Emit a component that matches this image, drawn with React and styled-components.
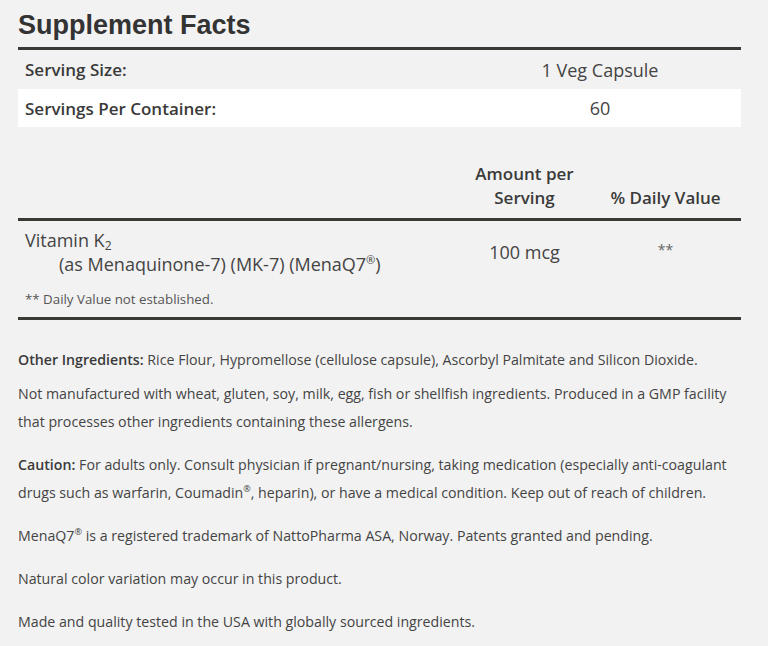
import React from "react"
import { styled, createGlobalStyle } from "styled-components"

const GlobalStyle = createGlobalStyle`
    html, body {
        margin: 0;
        padding: 0;
        background: #f2f2f2;
    }

    body {
        font-family: "Open Sans", "Liberation Sans", sans-serif;
        color: #444;
    }
`

const Page = styled.div`
    padding: 0 27px 0 18px;
    width: 723px;
`

const Title = styled.h2`
    margin: 0;
    padding: 10px 0 6px;

    font-family: "Liberation Sans", Arial, sans-serif;
    font-size: 27px;
    font-weight: 700;
    line-height: 31px;
    color: #333;

    border-bottom: 3px solid #3a3935;
`

const Table = styled.table`
    width: 100%;
    border-collapse: collapse;
    font-size: 18px;
    color: #444;

    td, th {
        padding: 0;
    }
`

const ServingRow = styled.tr`
    background: ${({ $white }) => ($white ? "#fff" : "transparent")};
    height: ${({ $h }) => $h}px;

    th {
        text-align: left;
        padding-left: 7px;
        font-size: 17px;
        font-weight: 600;
        color: #3a3a3a;
    }

    td {
        text-align: center;
    }
`

const HeadRow = styled.tr`
    height: 92px;

    th {
        font-size: 17px;
        font-weight: 600;
        color: #3a3a3a;
        text-align: center;
        vertical-align: bottom;
        padding: 0 0 8px;
        line-height: 24px;
        border-bottom: 3px solid #3a3935;
    }
`

const NutrientRow = styled.tr`
    td {
        padding-top: 7px;
        line-height: 24px;
        vertical-align: top;
    }

    td.name {
        padding-left: 7px;
    }

    td.amount {
        text-align: center;
        padding-top: 19px;
    }

    td.dv {
        text-align: center;
        padding-top: 17px;
        color: #666;
        font-size: 14px;
    }

    sub {
        font-size: 12px;
        vertical-align: -3px;
        line-height: 0;
    }

    sup {
        font-size: 11px;
        line-height: 0;
    }
`

const Indent = styled.div`
    padding-left: 34px;
`

const NoteRow = styled.tr`
    td {
        padding: 14px 7px 9px;
        font-size: 13.3px;
        color: #555;
        border-bottom: 3px solid #3a3935;
    }
`

const Notes = styled.div`
    padding-top: 26px;
    font-size: 14.2px;
    line-height: 28px;
    color: #444;

    p {
        margin: 0 0 15px;
    }

    p.tight {
        margin-bottom: 6px;
    }

    strong {
        font-weight: 600;
        color: #3a3a3a;
    }

    sup {
        font-size: 9px;
        line-height: 0;
    }
`

function App() {
    return (
        <>
            <GlobalStyle />
            <Page>
                <Title>Supplement Facts</Title>
                <Table>
                    <colgroup>
                        <col style={{ width: 441 }} />
                        <col style={{ width: 131 }} />
                        <col style={{ width: 151 }} />
                    </colgroup>
                    <tbody>
                        <ServingRow $h={39}>
                            <th>Serving Size:</th>
                            <td colSpan={2}>1 Veg Capsule</td>
                        </ServingRow>
                        <ServingRow $h={38} $white>
                            <th>Servings Per Container:</th>
                            <td colSpan={2}>60</td>
                        </ServingRow>
                        <HeadRow>
                            <th></th>
                            <th>Amount per<br />Serving</th>
                            <th>% Daily Value</th>
                        </HeadRow>
                        <NutrientRow>
                            <td className="name">
                                Vitamin K<sub>2</sub>
                                <Indent>(as Menaquinone-7) (MK-7) (MenaQ7<sup>®</sup>)</Indent>
                            </td>
                            <td className="amount">100 mcg</td>
                            <td className="dv">**</td>
                        </NutrientRow>
                        <NoteRow>
                            <td colSpan={3}>** Daily Value not established.</td>
                        </NoteRow>
                    </tbody>
                </Table>
                <Notes>
                    <p className="tight"><strong>Other Ingredients:</strong> Rice Flour, Hypromellose (cellulose capsule), Ascorbyl Palmitate and Silicon Dioxide.</p>
                    <p>Not manufactured with wheat, gluten, soy, milk, egg, fish or shellfish ingredients. Produced in a GMP facility that processes other ingredients containing these allergens.</p>
                    <p><strong>Caution:</strong> For adults only. Consult physician if pregnant/nursing, taking medication (especially anti-coagulant drugs such as warfarin, Coumadin<sup>®</sup>, heparin), or have a medical condition. Keep out of reach of children.</p>
                    <p>MenaQ7<sup>®</sup> is a registered trademark of NattoPharma ASA, Norway. Patents granted and pending.</p>
                    <p>Natural color variation may occur in this product.</p>
                    <p>Made and quality tested in the USA with globally sourced ingredients.</p>
                </Notes>
            </Page>
        </>
    )
}

export default App
